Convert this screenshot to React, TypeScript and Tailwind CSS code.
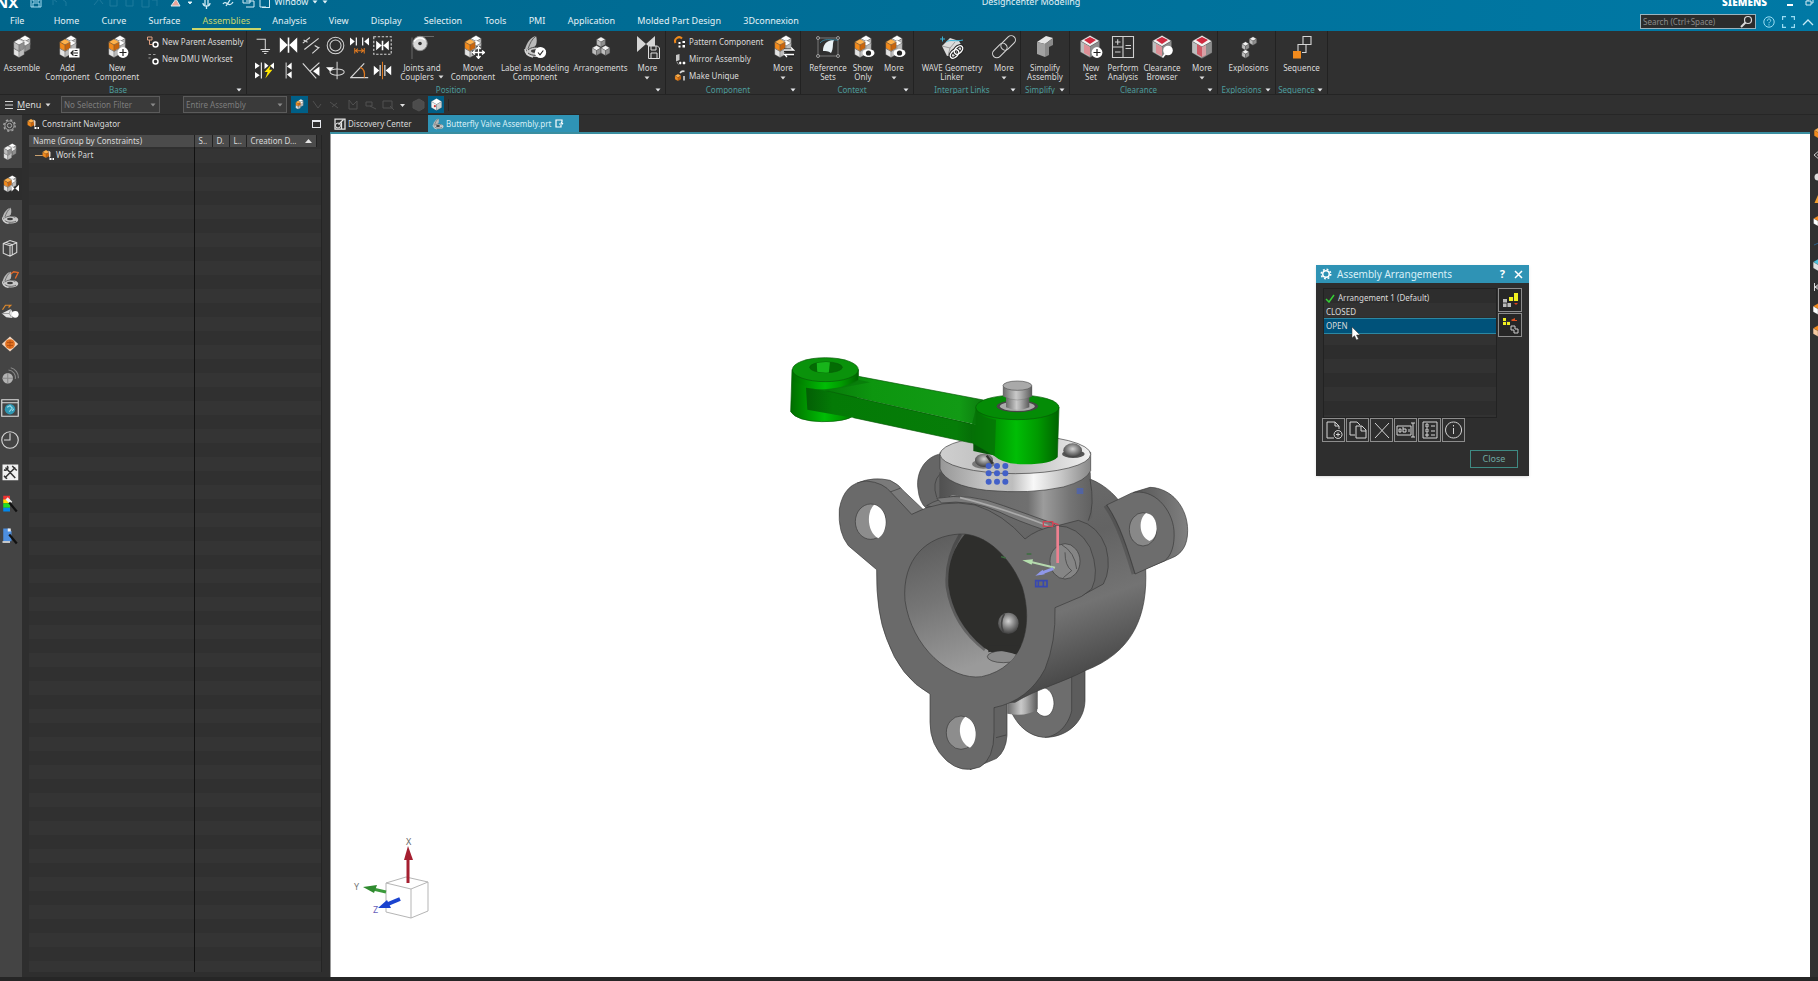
import React from "react";

type Kids = { children?: React.ReactNode };

/* ---------- small drawing helpers ---------- */

const GREY = ["#f2f2f2", "#bdbdbd", "#8e8e8e"];
const ORANGE = ["#ffb04a", "#f28a1c", "#c9650c"];
const WHITE = ["#ffffff", "#e4e4e4", "#bcbcbc"];
const PINK = ["#cf2a3f", "#e2b3b6", "#a9a9a9"];

function Box({ x, y, s, c }: { x: number; y: number; s: number; c: string[] }) {
  const w = s * 0.87;
  const h = s / 2;
  return (
    <g stroke="#4a4a4a" strokeWidth="0.3" strokeLinejoin="round">
      <path d={`M${x} ${y - s}L${x + w} ${y - h}L${x} ${y}L${x - w} ${y - h}Z`} fill={c[0]} />
      <path d={`M${x - w} ${y - h}L${x} ${y}V${y + s}L${x - w} ${y + h}Z`} fill={c[1]} />
      <path d={`M${x + w} ${y - h}L${x} ${y}V${y + s}L${x + w} ${y + h}Z`} fill={c[2]} />
    </g>
  );
}

function Icon({ size = 24, children }: Kids & { size?: number }) {
  return (
    <svg width={size} height={size} viewBox="0 0 24 24" fill="none" aria-hidden="true" className="shrink-0">
      {children}
    </svg>
  );
}

const Blocks = ({ front = GREY }: { front?: string[] }) => (
  <>
    <Box x={15} y={6.5} s={6} c={WHITE} />
    <Box x={15} y={11} s={6} c={front === GREY ? GREY : WHITE} />
    <Box x={9} y={16.5} s={6} c={WHITE} />
    <Box x={9} y={10} s={6} c={front} />
  </>
);

const PlusBadge = () => (
  <>
    <circle cx="18" cy="17.5" r="5.4" fill="#fff" />
    <path d="M18 14v7M14.5 17.5h7" stroke="#222" strokeWidth="1.2" />
  </>
);

const EyeBadge = () => (
  <>
    <ellipse cx="17.5" cy="18" rx="6" ry="4" fill="#fff" />
    <circle cx="17.5" cy="18" r="2.6" fill="#222" />
  </>
);

const Shell = () => (
  <>
    <path d="M2 14C4 7 8 2 13 1c1 3 1 6 0 9l-6 7z" fill="#b9b9b9" />
    <path d="M5 14C7 8 9 4 13 1" stroke="#5a5a5a" strokeWidth="1" />
    <ellipse cx="13" cy="17" rx="10" ry="5" fill="#c9c9c9" />
    <path d="M2 14c0 4 3 7 8 8" stroke="#d9d9d9" strokeWidth="1.5" />
    <path d="M5 15c3-3 9-4 14-1M5 18c4 3 10 3 15 1" stroke="#4a4a4a" strokeWidth="1" />
    <ellipse cx="12" cy="16" rx="4" ry="1.8" fill="#3c3c3c" />
  </>
);

const Glyphs = {
  assemble: <Blocks />,
  addComponent: (
    <>
      <Blocks front={ORANGE} />
      <rect x="13" y="13.5" width="10.5" height="9" fill="#fff" />
      <path d="M15 18h7M17.5 15.5L15 18l2.5 2.5M18.5 15.5h3M18.5 20.5h3" stroke="#222" strokeWidth="1.2" />
    </>
  ),
  newComponent: (
    <>
      <Blocks front={ORANGE} />
      <PlusBadge />
    </>
  ),
  joints: (
    <>
      <path d="M2 24V2.5M10 1.5h14" stroke="#777" strokeWidth="0.8" />
      <circle cx="10" cy="8.5" r="7.2" fill="#d8d8d8" stroke="#8e8e8e" />
      <path d="M4 6.5a7 7 0 0 1 11-1.5" stroke="#fff" strokeWidth="1.5" />
      <circle cx="10" cy="8.5" r="1.8" fill="#333" />
    </>
  ),
  move: (
    <>
      <Blocks front={ORANGE} />
      <path d="M17.5 11v13M11 17.5h13" stroke="#222" strokeWidth="4" />
      <path d="M17.5 12v11M12 17.5h11M15.5 14l2-2.5 2 2.5M15.5 21l2 2.5 2-2.5M14 15.5l-2.5 2 2.5 2M21 15.5l2.5 2-2.5 2" stroke="#fff" strokeWidth="1.3" />
    </>
  ),
  label: (
    <>
      <Shell />
      <circle cx="17.5" cy="17.5" r="5.6" fill="#fff" />
      <path d="M15 17.5l2 2.3 3.3-4.3" stroke="#222" strokeWidth="1.1" />
    </>
  ),
  arrangements: (
    <>
      <Box x={12} y={7} s={5} c={GREY} />
      <Box x={7.5} y={15.5} s={5} c={GREY} />
      <Box x={16.5} y={15.5} s={5} c={GREY} />
    </>
  ),
  moreSave: (
    <>
      <path d="M1 1l9 8-9 8zM19 1l-9 8 9 8z" fill="#d6d6d6" />
      <path d="M12.500 11h9l2 2v10.500h-11z" fill="#333" stroke="#ddd" />
      <path d="M15 11v4h5v-4M15 23v-5h6v5" stroke="#ddd" />
    </>
  ),
  moreArrows: (
    <>
      <Blocks front={ORANGE} />
      <path d="M13 15.5h10M13 20h10" stroke="#222" strokeWidth="4" />
      <path d="M13 15h9.5l-2.5-2.5M23 19.5h-9.5l2.5 2.5" stroke="#fff" strokeWidth="1.3" />
    </>
  ),
  refsets: (
    <>
      <path d="M2 3h20v18H2z" stroke="#8a8a8a" strokeWidth="0.8" />
      <path d="M7 16C7 10 10 5 18 5c-2 4 0 8-3 13-3-2-5-2-8-2z" fill="#e8f1f5" />
      <path d="M4 8C8 3 14 5 22 5" stroke="#38a3c7" strokeWidth="0.7" />
      {[[2, 3], [22, 3], [2, 21], [22, 21]].map(([x, y]) => (
        <circle key={`${x}-${y}`} cx={x} cy={y} r="1.5" fill="#333" stroke="#b5b5b5" strokeWidth="0.8" />
      ))}
    </>
  ),
  showOnly: (
    <>
      <Blocks front={ORANGE} />
      <EyeBadge />
    </>
  ),
  wave: (
    <>
      <path d="M2 11L10 3l9 3 4 7-6 8H7z" fill="#dcdcdc" />
      <path d="M2 11l8 2 5-6M10 13l-2 8" stroke="#8a8a8a" strokeWidth="0.8" />
      <path d="M0 4h5M2.5 1.5v5M6 7c4-3 9 0 17-2" stroke="#38b4d8" strokeWidth="1" />
      <ellipse cx="14.500" cy="19" rx="5" ry="3.2" transform="rotate(-45 14.500 19)" fill="#dcdcdc" stroke="#222" strokeWidth="3.4" />
      <ellipse cx="18.500" cy="15" rx="5" ry="3.2" transform="rotate(-45 18.500 15)" stroke="#222" strokeWidth="3.4" />
      <ellipse cx="14.500" cy="19" rx="5" ry="3.2" transform="rotate(-45 14.500 19)" stroke="#fff" strokeWidth="1.4" />
      <ellipse cx="18.500" cy="15" rx="5" ry="3.2" transform="rotate(-45 18.500 15)" stroke="#fff" strokeWidth="1.4" />
    </>
  ),
  chain: (
    <>
      <rect x="-1" y="11" width="17" height="8.500" rx="4.250" transform="rotate(-45 8 15)" stroke="#d5d5d5" strokeWidth="1.1" />
      <rect x="8" y="4" width="17" height="8.500" rx="4.250" transform="rotate(-45 16 8.500)" stroke="#d5d5d5" strokeWidth="1.1" />
    </>
  ),
  simplify: (
    <>
      <path d="M4 7l9-6 7 2-8 6z" fill="#e6e6e6" />
      <path d="M4 7l8 2v13l-8-3z" fill="#a2a2a2" />
      <path d="M12 9l8-6v7l-4 2v8l-4 2z" fill="#8a8a8a" />
    </>
  ),
  clearNew: (
    <>
      <Box x={11} y={11.5} s={11} c={GREY} />
      <path d="M11 2l6 3-6 4-6-4z" fill="#cf2a3f" />
      <path d="M11 12v9l-6-3V9z" fill="#de8f96" />
      <PlusBadge />
    </>
  ),
  perform: (
    <path d="M1.5 1.5h21v21h-21zM12 1.5v21M1.5 12H12M4 7h5.5M6.7 4.3v5.4M4 17h5.5M14.5 10.5h5.5M14.5 13.5h5.5" stroke="#d0d0d0" strokeWidth="1.1" />
  ),
  clearBrowse: (
    <>
      <Box x={12} y={11.5} s={11} c={GREY} />
      <path d="M12 2l6 3-6 4-6-4z" fill="#cf2a3f" />
      <path d="M12 12v9l-6-3V9z" fill="#de8f96" />
      <path d="M15.5 18.5l-3 4" stroke="#fff" strokeWidth="1.5" />
      <circle cx="18" cy="15.5" r="4.8" fill="#fff" />
    </>
  ),
  clearMore: (
    <>
      <Box x={12} y={12} s={11.5} c={GREY} />
      <path d="M12 2l6 3-6 4-6-4z" fill="#cf2a3f" />
      <path d="M12 12v10l-5-3V9z" fill="#cf5a66" />
      <path d="M12 12v10l4-2V10z" fill="#d9a0a5" />
    </>
  ),
  explosions: (
    <>
      <Box x={16} y={6} s={4.2} c={GREY} />
      <Box x={8.5} y={11} s={4.2} c={GREY} />
      <Box x={8.5} y={19} s={4.2} c={GREY} />
    </>
  ),
  sequence: (
    <>
      <path d="M13 1.5h8v8h-8zM8 16v-6.500h8v8h-4" stroke="#d5d5d5" strokeWidth="1.1" />
      <rect x="3" y="16" width="8" height="7.5" fill="#f28a1c" />
    </>
  ),
};

const constraintIcons: { name: string; art: React.ReactNode }[] = [
  { name: "Fix", art: <path d="M2 4h11v14M7 17h12M9 19.5h8M11.5 22h3" stroke="#d6d6d6" strokeWidth="1.3" /> },
  { name: "Touch align", art: <path d="M1 2l10 9.500L1 21zM23 2l-10 9.500L23 21zM11 2h2v19h-2z" fill="#fff" /> },
  { name: "Parallel", art: <path d="M1 9l9-7M3 17L21 3M13 22l9-8M2 5l5 3M16 12l5 3" stroke="#d6d6d6" strokeWidth="1.5" /> },
  { name: "Concentric", art: <><circle cx="12" cy="12" r="10.500" stroke="#d6d6d6" strokeWidth="1.3" /><circle cx="12" cy="12" r="7" stroke="#d6d6d6" strokeWidth="1.3" /></> },
  { name: "Distance", art: <><path d="M0 2l6 5-6 5zM24 2l-6 5 6 5z" fill="#fff" /><path d="M8 2v10M16 2v10" stroke="#fff" strokeWidth="1.5" /><path d="M6 15v7M18 15v7M7 18.5h10M10 16l-3 2.5 3 2.5M14 16l3 2.5-3 2.5" stroke="#e07a20" strokeWidth="1.3" /></> },
  { name: "Bond", art: <><path d="M1 1h22v22H1z" stroke="#d6d6d6" strokeWidth="1.4" strokeDasharray="3 2" /><path d="M4 6l7 6-7 6zM20 6l-7 6 7 6zM11 6h2v12h-2z" fill="#fff" /></> },
  { name: "Auto constrain", art: <><path d="M0 2l6 4-6 4zM0 14l6 4-6 4zM12 2l5 4-5 4zM24 2l-5 4 5 4z" fill="#fff" /><path d="M8 2v20" stroke="#fff" strokeWidth="1.3" /><path d="M20 5l-8 9h4l-3 8 9-11h-4z" fill="#ffe600" /></> },
  { name: "Align", art: <><path d="M9 2v20" stroke="#d6d6d6" strokeWidth="1.3" /><path d="M16 2l-6 5 6 4zM16 13l-6 4 6 5z" fill="#fff" /></> },
  { name: "Angle align", art: <><path d="M1 3l17 19M22 2L10 13" stroke="#d6d6d6" strokeWidth="1.5" /><path d="M22 7v12l-8-6z" fill="#fff" /></> },
  { name: "Center", art: <><path d="M14 1v22" stroke="#d6d6d6" strokeWidth="1.3" /><ellipse cx="14" cy="14" rx="9" ry="4" stroke="#d6d6d6" strokeWidth="1.3" /><path d="M0 8h10l-5 5z" fill="#fff" /></> },
  { name: "Angle", art: <><path d="M23 21H1L18 3" stroke="#d6d6d6" strokeWidth="1.5" /><path d="M13 8c5 2 6 7 5 13" stroke="#e07a20" strokeWidth="1.5" /></> },
  { name: "Fit", art: <><path d="M1 6l7 6-7 6zM23 6l-7 6 7 6z" fill="#fff" /><path d="M9 5v14M15 5v14" stroke="#fff" strokeWidth="1.3" /><path d="M12 1v22" stroke="#e07a20" strokeWidth="1.3" /></> },
];

const Caret = ({ className = "" }: { className?: string }) => (
  <svg width="6" height="4" viewBox="0 0 6 4" className={`shrink-0 ${className}`} aria-hidden="true">
    <path d="M0.5 0.5h5L3 3.5z" fill="currentColor" />
  </svg>
);

/* ---------- ribbon ---------- */

function Big({ icon, lines, w, caret }: { icon: keyof typeof Glyphs; lines: string[]; w: string; caret?: boolean | "inline" }) {
  return (
    <button type="button" className={`flex shrink-0 flex-col items-center pt-1 ${w}`}>
      <Icon>{Glyphs[icon]}</Icon>
      <span className="mt-1 flex flex-col items-center whitespace-nowrap leading-[9px]">
        {lines.map((l, i) => (
          <span key={l} className="flex items-center gap-1">
            {l}
            {caret === "inline" && i === lines.length - 1 && <Caret />}
          </span>
        ))}
        {caret === true && <Caret className="mt-1" />}
      </span>
    </button>
  );
}

function Group({ label, w, children }: Kids & { label: string; w: string }) {
  return (
    <section aria-label={label} className={`flex shrink-0 flex-col border-r border-[#222] ${w}`}>
      <div className="flex min-h-0 flex-1 items-start">{children}</div>
      <div className="flex h-[9px] items-center pr-1 text-[#4d9c9c]">
        <span className="flex-1 text-center leading-[9px]">{label}</span>
        <Caret className="text-gray-200" />
      </div>
    </section>
  );
}

function Small({ label, children }: Kids & { label: string }) {
  return (
    <button type="button" className="flex h-[17px] items-center gap-[3px] whitespace-nowrap">
      <Icon size={12}>{children}</Icon>
      {label}
    </button>
  );
}

function Ribbon() {
  return (
    <div className="flex h-16 shrink-0 overflow-hidden border-b border-[#242424] bg-[#303030]">
      <Group label="Base" w="w-[247px]">
        <Big icon="assemble" lines={["Assemble"]} w="w-11" />
        <Big icon="addComponent" lines={["Add", "Component"]} w="w-[47px]" />
        <Big icon="newComponent" lines={["New", "Component"]} w="w-[52px]" />
        <div className="flex flex-col pl-1 pt-[2px]">
          <Small label="New Parent Assembly">
            <path d="M1 2h9v6H1zM5 8v9h6" stroke="#e0a080" strokeWidth="2" />
            <circle cx="17" cy="17" r="5" stroke="#fff" strokeWidth="3" />
          </Small>
          <Small label="New DMU Workset">
            <path d="M3 3h5M3 10h4M12 3h5" stroke="#999" strokeWidth="2" />
            <circle cx="17" cy="17" r="5" stroke="#fff" strokeWidth="3" />
          </Small>
        </div>
      </Group>
      <Group label="Position" w="w-[419px]">
        <div className="grid w-[150px] shrink-0 grid-cols-6 gap-y-[5px] pl-2 pt-1">
          {constraintIcons.map((c) => (
            <button key={c.name} type="button" aria-label={c.name} className="h-5">
              <Icon size={19}>{c.art}</Icon>
            </button>
          ))}
        </div>
        <Big icon="joints" lines={["Joints and", "Couplers"]} w="w-[50px]" caret="inline" />
        <Big icon="move" lines={["Move", "Component"]} w="w-[52px]" />
        <Big icon="label" lines={["Label as Modeling", "Component"]} w="w-[72px]" />
        <Big icon="arrangements" lines={["Arrangements"]} w="w-[59px]" />
        <Big icon="moreSave" lines={["More"]} w="w-[35px]" caret />
      </Group>
      <Group label="Component" w="w-[135px]">
        <div className="flex w-[100px] shrink-0 flex-col pl-2 pt-[2px]">
          <Small label="Pattern Component">
            <path d="M3 14a8 8 0 0 1 13-9" stroke="#f28a1c" strokeWidth="4" />
            <path d="M9 12h4v4H9zM17 10h5v4h-5zM9 19h4v4H9zM17 18h5v5h-5z" fill="#fff" />
          </Small>
          <Small label="Mirror Assembly">
            <path d="M4 4l7-2v12l-7 3z" fill="#c8c8c8" />
            <path d="M11 18h3v4h-3zM18 18h4v4h-4zM6 18l3 5" fill="#fff" stroke="#fff" />
          </Small>
          <Small label="Make Unique">
            <Box x={8} y={15} s={7} c={ORANGE} />
            <path d="M12 6c3-4 7-4 9-3M20 12v9" stroke="#ddd" strokeWidth="3" />
          </Small>
        </div>
        <Big icon="moreArrows" lines={["More"]} w="w-[34px]" caret />
      </Group>
      <Group label="Context" w="w-[113px]">
        <Big icon="refsets" lines={["Reference", "Sets"]} w="w-[46px] ml-1" />
        <Big icon="showOnly" lines={["Show", "Only"]} w="w-6" />
        <Big icon="showOnly" lines={["More"]} w="w-[38px]" caret />
      </Group>
      <Group label="Interpart Links" w="w-[107px]">
        <Big icon="wave" lines={["WAVE Geometry", "Linker"]} w="w-[76px]" />
        <Big icon="chain" lines={["More"]} w="w-[28px]" caret />
      </Group>
      <Group label="Simplify" w="w-[49px]">
        <Big icon="simplify" lines={["Simplify", "Assembly"]} w="w-12" />
      </Group>
      <Group label="Clearance" w="w-[148px]">
        <Big icon="clearNew" lines={["New", "Set"]} w="w-8 ml-[5px]" />
        <Big icon="perform" lines={["Perform", "Analysis"]} w="w-8" />
        <Big icon="clearBrowse" lines={["Clearance", "Browser"]} w="w-[46px]" />
        <Big icon="clearMore" lines={["More"]} w="w-[34px]" caret />
      </Group>
      <Group label="Explosions" w="w-[58px]">
        <Big icon="explosions" lines={["Explosions"]} w="w-[57px] pl-1" />
      </Group>
      <Group label="Sequence" w="w-[52px]">
        <Big icon="sequence" lines={["Sequence"]} w="w-[51px]" />
      </Group>
    </div>
  );
}

/* ---------- header ---------- */

const menuTabs = ["File", "Home", "Curve", "Surface", "Assemblies", "Analysis", "View", "Display", "Selection", "Tools", "PMI", "Application", "Molded Part Design", "3Dconnexion"];

function Header() {
  return (
    <header className="flex h-[31px] shrink-0 flex-col overflow-hidden bg-[linear-gradient(90deg,#00658b,#0079a5)] text-[9px] text-[#e3f1f6]">
      <div className="-mt-2 grid h-5 shrink-0 grid-cols-[54%_auto_1fr] items-center">
        <div className="flex items-center">
          <span className="-ml-1 mr-3 text-[15px] font-bold leading-5 text-white">NX</span>
          <svg width="12" height="12" viewBox="0 0 12 12" fill="none" stroke="#a5dcf0" aria-hidden="true">
            <path d="M1 1h10v10H1zM3 1v4h6V1M3 11V7h6v4" />
          </svg>
          <svg width="112" height="12" viewBox="0 0 112 12" fill="none" stroke="#1d7a9c" className="ml-2" aria-hidden="true">
            <path d="M3 9V3l4 3M12 3l4 3v4M44 9l5-6 4 5M60 2v8h7V3M76 3h7v7h-7zM92 3h7v8h-7zM102 4h5v6" />
          </svg>
          <svg width="96" height="14" viewBox="0 0 96 14" fill="none" stroke="#d2ecf5" className="ml-2" aria-hidden="true">
            <path d="M1 11l5-7 4 7z" fill="#e9a59b" />
            <path d="M18 7h4l-2 2z" fill="#fff" />
            <path d="M35 4v6M38 4v6M33 8c0 4 7 4 7 0M36.500 11v3M53 9c3-5 6 5 10-2M56 11l4-6" strokeWidth="1.3" />
            <path d="M73 3h7v5h-7zM76 6h8v6h-8M90 1h6M90 1v11h6" />
          </svg>
          <span className="-ml-1 h-[11px] w-2 border border-l-0 border-[#d2ecf5]" />
          <span className="ml-1">Window</span>
          <Caret className="ml-1" />
          <Caret className="ml-1" />
        </div>
        <span>Designcenter Modeling</span>
        <div className="flex items-center justify-end pr-1">
          <span className="mr-5 text-[10px] font-black text-white">SIEMENS</span>
          <button type="button" aria-label="Minimize" className="mr-3 h-2 w-[6px] border-b-2 border-white" />
          <button type="button" aria-label="Restore">
            <svg width="9" height="10" viewBox="0 0 9 10" fill="none" stroke="#d2ecf5"><path d="M1 4h5v4H1zM3 4V1h5v5H6" /></svg>
          </button>
        </div>
      </div>
      <div className="flex h-[19px] shrink-0 items-stretch">
        <nav className="flex w-[810px] justify-between" aria-label="Ribbon tabs">
          {menuTabs.map((t, i) => (
            <a
              key={t}
              href={`#${i}`}
              className={
                t === "Assemblies"
                  ? "flex h-[18px] items-center whitespace-nowrap border-b-2 border-[#c9d66b] px-[11px] pt-[2px] text-[#c9d66b]"
                  : i === 0
                    ? "flex h-[18px] items-center whitespace-nowrap pl-[10px] pr-[18px]"
                    : "flex h-[18px] items-center whitespace-nowrap px-[11px]"
              }
            >
              {t}
            </a>
          ))}
        </nav>
        <div className="ml-auto flex items-center gap-[7px] pr-1">
          <label className="flex h-[15px] w-[116px] items-center border border-[#9bb3bd] bg-[#2c2c2c] px-[2px]">
            <input aria-label="Search" placeholder="Search (Ctrl+Space)" className="w-full min-w-0 bg-transparent text-[8px] leading-3 placeholder:text-[#8b8b8b]" />
            <svg width="13" height="13" viewBox="0 0 13 13" fill="none" stroke="#d8d8d8" strokeWidth="1.2" className="shrink-0">
              <circle cx="8" cy="5" r="3.5" /><path d="M5.5 7.5L1 12" strokeWidth="2" />
            </svg>
          </label>
          <button type="button" aria-label="Help">
            <svg width="12" height="12" viewBox="0 0 12 12" fill="none" stroke="#9adcf2"><circle cx="6" cy="6" r="5.2" /><path d="M4.3 4.8c0-2.4 3.4-2.4 3.4-.3C7.7 5.8 6 5.8 6 7.3M6 8.3v1.2" /></svg>
          </button>
          <button type="button" aria-label="Full screen">
            <svg width="13" height="12" viewBox="0 0 13 12" fill="none" stroke="#9adcf2" strokeWidth="1.2"><path d="M4 .6H.6V4M9 .6h3.4V4M4 11.4H.6V8M9 11.4h3.4V8" /></svg>
          </button>
          <button type="button" aria-label="Collapse ribbon">
            <svg width="12" height="8" viewBox="0 0 12 8" fill="none" stroke="#c5eaf6" strokeWidth="1.3"><path d="M1 7l5-5 5 5" /></svg>
          </button>
        </div>
      </div>
    </header>
  );
}

function Picker({ label, w }: { label: string; w: string }) {
  return (
    <div className={`relative ${w}`}>
      <select aria-label={label} disabled className="h-[17px] w-full appearance-none border border-[#5b5b5b] bg-[#3a3a3a] px-[2px] text-[8px] leading-3 text-[#7d7d7d] opacity-100">
        <option>{label}</option>
      </select>
      <Caret className="absolute right-1 top-[7px] text-[#8a8a8a]" />
    </div>
  );
}

function SelectionBar() {
  return (
    <div className="flex h-5 shrink-0 items-center border-b border-[#262626] bg-[#303030]">
      <button type="button" className="flex w-[61px] items-center gap-1 pl-[5px] text-[9px]">
        <svg width="8" height="8" viewBox="0 0 8 8" stroke="#d5d5d5"><path d="M0 .5h8M0 4h8M0 7.5h8" /></svg>
        <span><u>M</u>enu</span>
        <Caret />
      </button>
      <Picker label="No Selection Filter" w="w-[99px]" />
      <div className="w-[23px]" />
      <Picker label="Entire Assembly" w="w-[104px]" />
      <button type="button" aria-label="Assembly select" className="ml-1 flex h-[17px] w-[17px] items-center justify-center bg-[#005f87]">
        <Icon size={11}><Blocks front={ORANGE} /></Icon>
      </button>
      <svg width="120" height="14" viewBox="0 0 120 14" fill="none" stroke="#505050" aria-hidden="true">
        <path d="M5 3l5 7 3-4M22 4l8 6M24 9l5-4M41 2v9h8V3l-4 4zM58 4h6v4h-6zM62 8l6 3M75 3h9v7h-9zM82 8l4 4" />
        <path d="M92 6h5l-2.500 3z" fill="#e0e0e0" stroke="none" />
        <path d="M105 4l6-3 5 3v6l-5 3-6-3z" fill="#4c4c4c" />
      </svg>
      <button type="button" aria-label="Shaded view" className="flex h-[17px] w-4 items-center justify-center bg-[#005f87]">
        <Icon size={13}><Box x={12} y={12} s={11} c={["#fff", "#f1f1f1", "#cfcfcf"]} /><circle cx="9" cy="15" r="2" fill="#c33" /></Icon>
      </button>
      <span className="ml-1 h-3 w-px bg-[#242424]" />
    </div>
  );
}

/* ---------- left resource bar and navigator ---------- */

const railItems: { name: string; art: React.ReactNode }[] = [
  { name: "Assembly Navigator", art: <Blocks /> },
  { name: "Constraint Navigator", art: <><Blocks front={ORANGE} /><path d="M14 14l4 4-4 4zM24 13v9l-5-4z" fill="#fff" /></> },
  { name: "Part Navigator", art: <Shell /> },
  { name: "Reuse Library", art: <path d="M3 6l9-4 9 3v13l-9 5-9-4zM3 6l9 3v14M12 9l9-4M6 4.5l9 3v14" stroke="#d8d8d8" strokeWidth="1.4" /> },
  { name: "Simulation Navigator", art: <><Shell /><path d="M13 4l4-3 6 1-4 8" stroke="#e0692a" strokeWidth="1.8" /></> },
  { name: "Motion Navigator", art: <><path d="M2 9l4-6h7l-3 3" stroke="#e0892a" strokeWidth="1.6" /><path d="M1 14l12-6 3 5-1 7-8-1z" fill="#e5e5e5" /><path d="M13 8l-2 6 3 5M1 14l10 0" stroke="#888" /><circle cx="19" cy="15" r="4.5" fill="#fff" /></> },
  { name: "Process Studio", art: <><path d="M12 2l11 10-11 10L1 12z" fill="#f2d6bf" /><circle cx="12" cy="12" r="6.500" fill="#e07020" /><path d="M8 10h8M8 14h8M12 7v10" stroke="#a84a10" /></> },
  { name: "Web Services", art: <><circle cx="9" cy="15" r="7" fill="#b2b2b2" /><path d="M2 15h14M9 8v14M10 4a10 10 0 0 1 9 12M13 1a13 13 0 0 1 10 14" stroke="#888" strokeWidth="1.4" /></> },
  { name: "Web Browser", art: <><path d="M1 1h22v22H1zM1 5h22" stroke="#e0e0e0" strokeWidth="1.5" /><circle cx="12" cy="13.5" r="7" fill="#2f97b2" /><path d="M8 11l4-2 3 3-4 5M15 16l2-3" stroke="#9ad8e6" strokeWidth="1.5" /></> },
  { name: "History", art: <><circle cx="12" cy="12" r="11" stroke="#d8d8d8" strokeWidth="1.5" /><path d="M12 3v9H4" stroke="#d8d8d8" strokeWidth="1.5" /></> },
  { name: "Process Tools", art: <><path d="M2 2h21v21H2z" fill="#f0f0f0" /><path d="M5 20L19 6M6 6l13 14M4 9c4 2 7-3 4-5M15 4l6 6M4 17l4 4" stroke="#333" strokeWidth="2" /></> },
  { name: "Roles", art: <><path d="M3 1h9v6H3z" fill="#e33" /><path d="M3 6h9v5H3z" fill="#fd0" /><path d="M3 11h9v6H3z" fill="#2d2" /><path d="M3 17h9v5H3z" fill="#08e" /><path d="M9 3l6 6-3 3-6-6z" fill="#eee" /><path d="M11 10l10 12" stroke="#111" strokeWidth="3" /></> },
  { name: "Systems", art: <><path d="M3 2h8l3 4v13H3z" fill="#4d8fe0" /><path d="M9 2h4v4H9zM2 19h10v2H2z" fill="#eee" /><path d="M11 10l10 12" stroke="#111" strokeWidth="3" /></> },
];

function LeftRail() {
  return (
    <nav aria-label="Resource bar" className="flex w-[22px] shrink-0 flex-col bg-[#444]">
      <button type="button" aria-label="Resource bar options" className="flex h-[21px] items-center justify-center pr-1">
        <Icon size={13}>
          <circle cx="12" cy="12" r="4" stroke="#aaa" strokeWidth="1.8" />
          <circle cx="12" cy="12" r="8.5" stroke="#aaa" strokeWidth="1.8" />
          <circle cx="12" cy="12" r="10.5" stroke="#aaa" strokeWidth="2.5" strokeDasharray="4 4.25" />
        </Icon>
      </button>
      {railItems.map((r, i) => (
        <button
          key={r.name}
          type="button"
          aria-label={r.name}
          className={i === 1 ? "flex h-8 items-center justify-center bg-[#2d2d2d] pr-[2px]" : "flex h-8 items-center justify-center pr-[2px]"}
        >
          <Icon size={18}>{r.art}</Icon>
        </button>
      ))}
    </nav>
  );
}

const NodeIcon = () => (
  <Icon size={12}>
    <Box x={8} y={10} s={8} c={ORANGE} />
    <path d="M13 3l4 3v9l-3 3v-6z" fill="#e5d5c5" />
    <path d="M15 18h4v4h-4zM21 18h3v4h-3z" fill="#fff" />
  </Icon>
);

function Navigator() {
  const cell = "border-r border-[#222] px-1 text-left font-normal";
  return (
    <aside className="flex w-[308px] shrink-0 flex-col bg-[#2e2e2e]">
      <div className="flex h-5 shrink-0 items-center gap-[3px] pb-[2px] pl-[5px] pr-[9px]">
        <NodeIcon />
        <h2 className="flex-1">Constraint Navigator</h2>
        <button type="button" aria-label="Maximize" className="h-2 w-[9px] border border-t-2 border-gray-200" />
      </div>
      <div className="ml-[7px] mr-2 flex flex-1 flex-col border-r border-[#242424] bg-[repeating-linear-gradient(180deg,#303030_0px,#303030_14px,#343434_14px,#343434_28px)] pr-1">
        <table className="w-full flex-1 table-fixed border-collapse leading-3">
          <colgroup>
            <col className="w-[165px]" />
            <col className="w-[18px]" />
            <col className="w-[17px]" />
            <col className="w-[17px]" />
            <col />
          </colgroup>
          <thead className="bg-[#4b4b4b]">
            <tr className="h-3">
              <th className={cell}>Name (Group by Constraints)</th>
              <th className={cell}>S..</th>
              <th className={cell}>D.</th>
              <th className={cell}>L..</th>
              <th className={cell}>
                <span className="flex items-center justify-between">
                  Creation D...
                  <svg width="7" height="4" viewBox="0 0 7 4"><path d="M0 4h7L3.5 0z" fill="#e5e5e5" /></svg>
                </span>
              </th>
            </tr>
          </thead>
          <tbody>
            <tr className="h-4">
              <td className="border-r border-[#111] pl-[6px]">
                <span className="flex items-center gap-[2px]">
                  <span className="-mr-[3px] h-px w-2 bg-[#c8a070]" />
                  <NodeIcon />
                  Work Part
                </span>
              </td>
              <td colSpan={4} />
            </tr>
            <tr>
              <td className="border-r border-[#111]" />
              <td colSpan={4} />
            </tr>
          </tbody>
        </table>
      </div>
      <div className="h-[5px] shrink-0" />
    </aside>
  );
}

/* ---------- model ---------- */

function Valve() {
  return (
    <svg width="430" height="440" viewBox="0 0 1290 1320" className="absolute left-[439px] top-[205px]" role="img" aria-label="Butterfly valve assembly">
      <defs>
        <linearGradient id="gBody" x1="0" y1="0" x2="0.35" y2="1">
          <stop offset="0" stopColor="#707070" /><stop offset="0.45" stopColor="#636363" /><stop offset="0.72" stopColor="#737373" /><stop offset="1" stopColor="#4a4a4a" />
        </linearGradient>
        <linearGradient id="gNeck"><stop offset="0" stopColor="#505050" /><stop offset="0.2" stopColor="#686868" /><stop offset="0.58" stopColor="#707070" /><stop offset="0.68" stopColor="#9c9c9c" /><stop offset="0.85" stopColor="#757575" /><stop offset="1" stopColor="#606060" /></linearGradient>
        <linearGradient id="gPlate"><stop offset="0" stopColor="#979797" /><stop offset="0.3" stopColor="#c4c4c4" /><stop offset="0.48" stopColor="#bdbdbd" /><stop offset="0.62" stopColor="#f8f8f8" /><stop offset="0.8" stopColor="#c8c8c8" /><stop offset="1" stopColor="#888" /></linearGradient>
        <linearGradient id="gTop"><stop offset="0" stopColor="#cfcfcf" /><stop offset="0.5" stopColor="#b9b9b9" /><stop offset="1" stopColor="#f0f0f0" /></linearGradient>
        <linearGradient id="gGreen"><stop offset="0" stopColor="#006d00" /><stop offset="0.18" stopColor="#008b00" /><stop offset="0.5" stopColor="#00bd05" /><stop offset="0.75" stopColor="#009a00" /><stop offset="1" stopColor="#006400" /></linearGradient>
        <linearGradient id="gArm"><stop offset="0" stopColor="#035f05" /><stop offset="0.15" stopColor="#047a06" /><stop offset="0.85" stopColor="#067d08" /><stop offset="1" stopColor="#056306" /></linearGradient>
        <linearGradient id="gArmTop"><stop offset="0" stopColor="#087a0a" /><stop offset="0.3" stopColor="#0d960f" /><stop offset="0.85" stopColor="#129a15" /><stop offset="1" stopColor="#0c7c0e" /></linearGradient>
        <linearGradient id="gShaft"><stop offset="0" stopColor="#6a6a6a" /><stop offset="0.45" stopColor="#c9c9c9" /><stop offset="0.6" stopColor="#b0b0b0" /><stop offset="1" stopColor="#5a5a5a" /></linearGradient>
        <linearGradient id="gBore" x1="0" y1="0" x2="0.3" y2="1"><stop offset="0" stopColor="#585858" /><stop offset="0.5" stopColor="#757575" /><stop offset="1" stopColor="#9a9a9a" /></linearGradient>
        <radialGradient id="gBall" cx="0.5" cy="0.4" r="0.6"><stop offset="0" stopColor="#d2d2d2" /><stop offset="0.5" stopColor="#858585" /><stop offset="1" stopColor="#3c3c3c" /></radialGradient>
        <linearGradient id="gRim"><stop offset="0" stopColor="#555" /><stop offset="1" stopColor="#808080" /></linearGradient>
        <clipPath id="bore"><path d="M570 585C650 582 725 660 757 745C790 855 765 985 635 1013C540 1025 425 925 405 785C395 660 470 590 570 585Z" /></clipPath>
        <clipPath id="eye"><ellipse cx="168" cy="85" rx="49" ry="16" /></clipPath>
      </defs>
      <g stroke="#3a3a3a" strokeWidth="2" strokeLinejoin="round">
        <path d="M515 344C465 352 437 400 444 450Q448 490 468 507L540 500V400Z" fill="#666" />
        <path d="M510 405Q485 430 500 475" fill="none" />
        {/* rear bottom lug and stem */}
        <path d="M905 1000L945 990V1085C943 1150 890 1195 825 1195Z" fill="#5c5c5c" />
        <path d="M800 1040L905 1010V1115C895 1160 860 1195 820 1195C775 1190 745 1160 727 1125L780 1100Z" fill="#6d6d6d" />
        <path d="M800 1050C828 1035 852 1060 852 1095C848 1135 820 1142 800 1118Z" fill="#fff" />
        <path d="M712 1085L775 1060L803 1052V1110Q770 1135 712 1124Z" fill="url(#gShaft)" stroke="none" />
        {/* body */}
        <path d="M470 500C560 440 800 470 960 420C1010 440 1045 475 1070 520L1127 690C1133 830 1090 940 945 995C880 1030 800 1050 735 1090L640 1090L560 520Z" fill="url(#gBody)" />
        {/* right lug */}
        <path d="M1090 460L1140 445C1205 447 1253 505 1253 575C1253 620 1235 645 1205 657L1125 690Z" fill="url(#gRim)" />
        <path d="M1010 498L1085 462C1150 445 1207 510 1212 575C1215 620 1203 650 1185 665L1095 705C1075 640 1050 555 1010 498Z" fill="#6d6d6d" />
        <path d="M1006 500C1046 555 1071 640 1091 705" stroke="#333" strokeWidth="12" opacity="0.3" fill="none" />
        <ellipse cx="1119" cy="571" rx="41" ry="50" fill="#888" />
        <path d="M1128 522C1150 525 1160 545 1160 570C1158 590 1150 602 1138 606C1105 590 1105 540 1128 522Z" fill="#fff" stroke="none" />
        {/* neck */}
        <path d="M508 400V480Q560 455 680 490L860 570Q935 575 967 535L962 400Z" fill="url(#gNeck)" stroke="none" />
        <path d="M960 420Q975 500 955 545" fill="none" />
        <path d="M500 478Q600 460 700 500L855 555L830 575Q740 545 690 520Q600 480 515 492Z" fill="#7a7a7a" />
        <path d="M570 476Q680 502 835 560" stroke="#aaa" strokeWidth="5" fill="none" />
        {/* plate */}
        <path d="M510 340V390Q530 440 650 454Q780 466 880 444Q950 425 962 395V340Z" fill="url(#gPlate)" />
        <ellipse cx="736" cy="346" rx="226" ry="58" fill="url(#gTop)" />
        <ellipse cx="640" cy="375" rx="34" ry="14" fill="#777" stroke="none" />
        <ellipse cx="642" cy="364" rx="27" ry="20" fill="url(#gBall)" stroke="none" />
        <path d="M650 350l18 24" stroke="#333" strokeWidth="7" />
        <ellipse cx="910" cy="345" rx="34" ry="12" fill="#555" stroke="none" />
        <ellipse cx="908" cy="334" rx="28" ry="21" fill="url(#gBall)" stroke="none" />
      </g>
      {/* lever */}
      <path d="M610 300L690 320V352L650 345L610 336Z" fill="#055508" />
      <g stroke="#075a08" strokeWidth="2" strokeLinejoin="round">
        <path d="M66 92L62 218Q80 246 155 248Q230 248 250 230L265 150V92Z" fill="url(#gGreen)" />
        <path d="M108 146L165 154L640 262V318L605 312L250 236L200 228L112 212Z" fill="url(#gArm)" stroke="none" />
        <path d="M165 154L265 112L640 183V262Z" fill="url(#gArmTop)" stroke="none" />
        <path d="M265 112L640 183M165 154L600 254M250 236L605 312" fill="none" />
        <path d="M66 92V126Q110 148 165 150Q235 148 265 124V92Z" fill="url(#gGreen)" stroke="none" />
        <path d="M112 148Q200 160 265 122L300 130L165 156Z" fill="#087a0a" stroke="none" opacity="0.8" />
        <ellipse cx="166" cy="92" rx="99" ry="36" fill="#0a920b" />
        <ellipse cx="168" cy="85" rx="49" ry="16" fill="#036c03" />
        <path clipPath="url(#eye)" d="M140 66h40l-4 40h-34z" fill="#17b51a" stroke="none" />
        <path d="M617 205V250L610 312L672 350Q700 376 765 376Q845 376 862 355L867 205Z" fill="url(#gGreen)" stroke="none" />
        <path d="M617 212Q630 236 678 242L674 350L605 312V258Z" fill="#067207" stroke="none" opacity="0.75" />
        <path d="M862 355L867 205" fill="none" />
        <ellipse cx="742" cy="205" rx="125" ry="37" fill="#048c06" />
      </g>
      <ellipse cx="742" cy="202" rx="62" ry="18" fill="#464646" />
      <ellipse cx="742" cy="202" rx="52" ry="14" fill="#aaa" />
      <path d="M708 152V205Q742 220 778 205V152Z" fill="url(#gShaft)" />
      <path d="M699 140V172Q742 194 786 172V140Z" fill="url(#gShaft)" stroke="#666" strokeWidth="1" />
      <ellipse cx="742" cy="140" rx="43" ry="14" fill="#a9a9a9" stroke="#555" strokeWidth="2" />
      {/* front flange */}
      <g stroke="#3a3a3a" strokeWidth="2" strokeLinejoin="round">
        <path d="M262 432Q310 412 360 424Q385 435 400 455L460 512L425 528Z" fill="#7a7a7a" />
        <path d="M352 462l38-14" fill="none" />
        <path d="M855 562L925 544Q985 560 1008 625Q1025 690 1000 735L935 770Z" fill="#646464" />
        <path d="M672 1105L711 1088V1190Q708 1235 680 1258L600 1292Z" fill="#636363" />
        <path d="M425 526Q515 477 615 498Q700 525 765 600Q800 570 858 560Q925 560 960 625Q990 700 965 750L935 772L855 806Q858 910 825 990Q775 1085 672 1106V1180Q672 1260 630 1284Q575 1305 530 1265Q480 1220 480 1150V1065Q390 1015 350 900Q318 820 320 692L235 620Q203 580 208 510Q222 430 290 426Q340 430 365 462Z" fill="#6a6a6a" />
        <path d="M570 585C650 582 725 660 757 745C790 855 765 985 635 1013C540 1025 425 925 405 785C395 660 470 590 570 585Z" fill="url(#gBore)" />
        <g clipPath="url(#bore)">
          <path d="M585 585Q530 650 535 740Q550 850 640 925Q680 955 740 955L800 940V580Z" fill="#2e2e2c" stroke="none" />
          <path d="M572 585Q525 660 532 745Q550 860 645 932" stroke="#333" strokeWidth="10" opacity="0.45" fill="none" />
          <ellipse cx="700" cy="953" rx="48" ry="18" fill="#8a8a8a" />
          <path d="M655 940Q690 925 760 955V920H655Z" fill="#2e2e2c" stroke="none" />
        </g>
        <ellipse cx="715" cy="853" rx="31" ry="32" fill="url(#gBall)" stroke="none" />
        <path d="M703 825Q688 850 700 880" stroke="#444" strokeWidth="5" fill="none" />
        <ellipse cx="302" cy="548" rx="46" ry="53" fill="#8d8d8d" />
        <path d="M312 497C352 505 360 575 325 598C292 580 288 522 312 497Z" fill="#fff" stroke="none" />
        <ellipse cx="573" cy="1181" rx="44" ry="50" fill="#8d8d8d" />
        <path d="M586 1133C622 1145 627 1205 600 1226C565 1210 560 1155 586 1133Z" fill="#fff" stroke="none" />
        <ellipse cx="885" cy="667" rx="45" ry="53" fill="#858585" />
        <path d="M875 617Q915 640 920 690M885 640Q885 680 905 695L880 716" fill="none" />
        <path d="M678 1196l30-8" fill="none" />
      </g>
      {/* selection handles and component axes */}
      <g fill="#4260c8">
        {[656, 681, 706].map((x) => [381, 403, 428].map((y) => <circle key={`${x}-${y}`} cx={x} cy={y} r="9" />))}
        <path d="M920 447h20v18h-20z" opacity="0.6" />
      </g>
      <path d="M863 672V560" stroke="#ee8090" strokeWidth="8" />
      <path d="M820 548h28v14h-28zM848 552l18 5" stroke="#cf4455" strokeWidth="4" fill="none" />
      <path d="M855 686L780 668" stroke="#b5d8ae" strokeWidth="6" />
      <path d="M757 664l32-3-4 16z" fill="#b5e0ae" />
      <path d="M850 689L810 704" stroke="#8f98ea" strokeWidth="9" />
      <path d="M796 710l22-18 6 14z" fill="#8f98ea" />
      <path d="M797 725h34v18h-34zM805 725v18M820 725v18" stroke="#3848b0" strokeWidth="5" fill="none" />
      <path d="M770 645h14M693 653l14 4" stroke="#3b6f3f" strokeWidth="4" />
    </svg>
  );
}

function Triad() {
  return (
    <svg width="90" height="90" viewBox="0 0 90 90" fill="none" className="absolute bottom-[49px] left-5" role="img" aria-label="View triad">
      <path d="M35 45l20-6 22 5v29l-17 7-25-6zM35 45l25 6 17-7M60 51v29" stroke="#b5b5b5" />
      <path d="M57 45V21" stroke="#a51f30" strokeWidth="3" />
      <path d="M53 22l4-14 5 14z" fill="#a51f30" />
      <path d="M35 54l-13-3" stroke="#3b9a3b" strokeWidth="3" />
      <path d="M12 49l14-2-3 8z" fill="#2f8a2f" />
      <path d="M49 61l-12 5" stroke="#1a43cf" strokeWidth="4" />
      <path d="M27 70l9-8 4 8z" fill="#1a43cf" />
      <g fontSize="9" fontFamily="Noto Sans, sans-serif">
        <text x="55" y="7" fill="#666">X</text>
        <text x="3" y="52" fill="#777">Y</text>
        <text x="22" y="75" fill="#6860b8">Z</text>
      </g>
    </svg>
  );
}

/* ---------- dialog ---------- */

const tools: { name: string; d: string }[] = [
  { name: "New arrangement", d: "M11 19H4V3h8l4 4v3M12 3v4h4M15 11.5a4 4 0 1 0 .1 0M15 13.5v4M13 15.5h4" },
  { name: "Copy arrangement", d: "M8 16H3V3h7l3 3M9 7h6l4 4v8H9zM14 7v5h5" },
  { name: "Delete arrangement", d: "M4 4l14 15M18 4L4 19" },
  { name: "Rename arrangement", d: "M2 7h14v9H2zM18 4v14M16 4h4M16 18h4M4 10h2v3H4zM8 8v5h3v-3H8M14 10v3" },
  { name: "Properties", d: "M4 3h14v16H4zM7 5v3h2V5zM7 10v3h2v-3zM7 15v2h2v-2zM12 7h4M12 12h4M12 16h4" },
  { name: "Information", d: "M10.500 3a8 8 0 1 0 .1 0M10.500 9v6M10.500 6v1.500" },
];

function ArrangementsDialog() {
  return (
    <div role="dialog" aria-label="Assembly Arrangements" className="absolute left-[985px] top-[131px] w-[213px] bg-[#2e2e2e] pb-2 text-[8px] shadow-sm">
      <div className="flex h-[18px] items-center bg-[#2f93b5] pl-1 pr-[6px] text-[10px] text-[#d9f0f7]">
        <Icon size={12}>
          <circle cx="12" cy="12" r="6.5" stroke="#fff" strokeWidth="3" />
          <circle cx="12" cy="12" r="9.5" stroke="#fff" strokeWidth="3" strokeDasharray="3.7 3.76" />
        </Icon>
        <h2 className="ml-[5px] flex-1">Assembly Arrangements</h2>
        <button type="button" aria-label="Dialog help" className="mr-[9px] text-[11px] font-bold leading-3 text-white">?</button>
        <button type="button" aria-label="Close dialog">
          <svg width="9" height="9" viewBox="0 0 9 9" stroke="#fff" strokeWidth="1.5"><path d="M1 1l7 7M8 1L1 8" /></svg>
        </button>
      </div>
      <div className="flex px-[7px] pt-[5px]">
        <ul role="listbox" aria-label="Arrangements" className="h-[130px] flex-1 border border-[#222] bg-[repeating-linear-gradient(180deg,#2d2d2d_0px,#2d2d2d_14px,#323232_14px,#323232_28px)] pt-[2px]">
          <li role="option" aria-selected="false" className="flex h-[14px] items-center gap-[3px] pl-px">
            <svg width="10" height="9" viewBox="0 0 10 9" fill="none" stroke="#35d035" strokeWidth="1.5"><path d="M1 5l3 3 5-7" /></svg>
            Arrangement 1 (Default)
          </li>
          <li role="option" aria-selected="false" className="flex h-[13px] items-center pl-[2px]">CLOSED</li>
          <li role="option" aria-selected="true" className="flex h-4 items-center border-y border-[#2b87a3] bg-[#00527a] pl-[2px]">OPEN</li>
        </ul>
        <div className="flex flex-col gap-px pl-px">
          <button type="button" aria-label="Use arrangement" className="h-6 w-6 border border-[#8d8d8d] bg-[#262626]">
            <svg width="22" height="22" viewBox="0 0 22 22">
              <path d="M4 10h4v4h4v4H4z" fill="#bbb" /><path d="M10 8h5V4h4v8h-9z" fill="#f0f020" /><path d="M4 14h4v4M14.5 8v4" stroke="#333" fill="none" /><path d="M15 14h4l-2 2z" fill="#e04020" />
            </svg>
          </button>
          <button type="button" aria-label="Edit arrangement" className="h-6 w-6 border border-[#8d8d8d] bg-[#262626]">
            <svg width="22" height="22" viewBox="0 0 22 22">
              <path d="M4 4h3v3h4v4H4z" fill="#f0f020" /><path d="M4 7.5h7M7.5 7v4" stroke="#333" /><path d="M12 6l4-2v2h2v1h-5z" fill="#e05020" /><path d="M12 12h4v3h3v4h-4v-3h-3z" stroke="#ccc" fill="none" />
            </svg>
          </button>
        </div>
      </div>
      <div className="flex gap-px px-[6px]">
        {tools.map((t) => (
          <button key={t.name} type="button" aria-label={t.name} className="h-6 w-[23px] border border-[#8d8d8d]">
            <svg width="21" height="22" viewBox="0 0 21 22" fill="none" stroke="#d5d5d5"><path d={t.d} /></svg>
          </button>
        ))}
      </div>
      <div className="flex justify-end pr-[11px] pt-2">
        <button type="button" className="h-[18px] w-12 border border-[#3f8a83] text-[9px] text-[#6fa8a2]">Close</button>
      </div>
      <svg width="10" height="14" viewBox="0 0 10 14" className="absolute left-[35px] top-[62px]" aria-hidden="true">
        <path d="M1 0v11l2.5-2.3L5.5 13l2-1-2-4H9z" fill="#fff" stroke="#333" strokeWidth="0.5" />
      </svg>
    </div>
  );
}

/* ---------- graphics area ---------- */

function Graphics() {
  return (
    <main className="flex min-w-0 flex-1 flex-col">
      <div className="flex h-[19px] shrink-0 items-end border-b-2 border-[#3a8ea0] bg-[#2f2f2f]">
        <a href="#discovery" className="flex h-[17px] w-[98px] items-center gap-[2px] pl-1">
          <Icon size={12}>
            <path d="M2 2h20v20H2z" stroke="#e5e5e5" strokeWidth="2.5" /><circle cx="8" cy="15" r="5" stroke="#e5e5e5" strokeWidth="2" /><path d="M9 13L19 3M15 9v13" stroke="#e5e5e5" strokeWidth="2.5" />
          </Icon>
          Discovery Center
        </a>
        <a href="#valve" className="flex h-[17px] w-[151px] items-center gap-[2px] bg-[#2f93b5] pl-1 text-[#d9f0f7]">
          <Icon size={12}><Shell /></Icon>
          Butterfly Valve Assembly.prt
          <svg width="9" height="9" viewBox="0 0 9 9" fill="none" stroke="#fff" strokeWidth="1.200" className="ml-[2px]"><path d="M6 1H1v7h5V6M3 1h4v2M4 5h4M6 3l2 2" /></svg>
        </a>
      </div>
      <div className="relative flex-1 overflow-hidden border-l border-[#999] bg-white">
        <Valve />
        <Triad />
        <ArrangementsDialog />
      </div>
    </main>
  );
}

const edgeItems: { name: string; art: React.ReactNode }[] = [
  { name: "Edge move", art: <Box x={12} y={12} s={11} c={ORANGE} /> },
  { name: "Edge sketch", art: <path d="M14 2L2 12l12 10M8 12h16" stroke="#ccc" strokeWidth="2" /> },
  { name: "Edge point", art: <circle cx="10" cy="12" r="7" fill="#ddd" /> },
  { name: "Edge extrude", art: <path d="M3 20L10 4l10 16z" fill="#f2a030" /> },
  { name: "Edge block", art: <Box x={10} y={12} s={10} c={["#f28a1c", "#fff", "#ccc"]} /> },
  { name: "Edge plane", art: <path d="M2 16l18-8" stroke="#2b5f8a" strokeWidth="2" /> },
  { name: "Edge shade", art: <Box x={11} y={12} s={12} c={["#4cc2dc", "#e0e0e0", "#999"]} /> },
  { name: "Edge measure", art: <path d="M3 4v16M4 12h12M12 6l-8 6 8 6" stroke="#ddd" strokeWidth="2" /> },
  { name: "Edge replace", art: <Box x={10} y={12} s={11} c={["#f28a1c", "#fff", "#ccc"]} /> },
  { name: "Edge hide", art: <Box x={10} y={12} s={11} c={["#f28a1c", "#f6c8a0", "#ccc"]} /> },
];

export default function App() {
  return (
    <div className="flex h-screen flex-col overflow-hidden bg-[#303030] font-['Noto_Sans',sans-serif] text-[8px] text-[#dadada]">
      <Header />
      <Ribbon />
      <SelectionBar />
      <div className="flex min-h-0 flex-1">
        <LeftRail />
        <Navigator />
        <Graphics />
        <nav aria-label="Side toolbar" className="flex w-2 shrink-0 flex-col gap-[10px] overflow-hidden bg-[#303030] pl-[3px] pt-3">
          {edgeItems.map((e) => (
            <button key={e.name} type="button" aria-label={e.name} className="h-3 w-3">
              <Icon size={12}>{e.art}</Icon>
            </button>
          ))}
        </nav>
      </div>
      <div className="h-1 shrink-0 bg-[#262626]" />
    </div>
  );
}
